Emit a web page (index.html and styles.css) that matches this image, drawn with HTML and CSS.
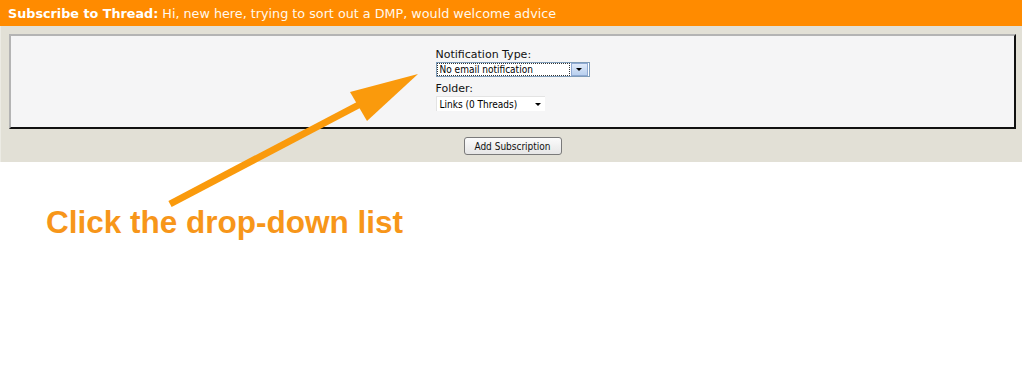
FILE: index.html
```html
<!DOCTYPE html>
<html lang="en">
<head>
    <meta charset="UTF-8">
    <title>Subscribe to Thread</title>
    <link rel="stylesheet" href="styles.css">
</head>
<body>
    <div class="page">
        <div class="thead">
            <strong>Subscribe to Thread:</strong> Hi, new here, trying to sort out a DMP, would welcome advice
        </div>
        <div class="panel">
            <div class="panel-inner">
                <div class="form-block">
                    <label>Notification Type:</label>
                    <div class="select select-focus">
                        <span class="select-text">No email notification</span>
                        <span class="select-btn"><span class="caret"></span></span>
                    </div>
                    <label>Folder:</label>
                    <div class="select select-plain">
                        <span class="select-text">Links (0 Threads)</span>
                        <span class="select-btn"><span class="caret"></span></span>
                    </div>
                </div>
            </div>
            <div class="actions">
                <button class="button">Add Subscription</button>
            </div>
        </div>

        <div class="callout">Click the drop-down list</div>

        <!-- annotation arrow drawn over the form -->
        <svg class="arrow" width="1024" height="369" viewBox="0 0 1024 369">
            <line x1="170" y1="204" x2="368" y2="100" stroke="#fa9a0c" stroke-width="7"/>
            <polygon points="418,74 350,92 367,121" fill="#fa9a0c"/>
        </svg>
    </div>
</body>
</html>
```

FILE: styles.css
```css
body {
    margin: 0;
    padding: 0;
    background-color: #ffffff;
    font-family: "DejaVu Sans", Verdana, sans-serif;
}

.page {
    position: relative;
    width: 1022px;
    height: 369px;
}

.thead {
    background-color: #ff8b00;
    color: #fff8ec;
    font-size: 12.75px;
    height: 26px;
    line-height: 27px;
    padding-left: 8px;
    white-space: nowrap;
}

.thead strong {
    color: #ffffff;
}

.panel {
    background-color: #e2e0d6;
    padding: 8px 6px 7px 8px;
    border-left: 1px solid #ecebe4;
}

.panel-inner {
    background-color: #f5f5f6;
    border-top: 2px solid #b4b4b4;
    border-left: 2px solid #b4b4b4;
    border-right: 2px solid #111111;
    border-bottom: 2px solid #111111;
    height: 91px;
    display: flex;
    justify-content: center;
}

.form-block {
    display: flex;
    flex-direction: column;
    align-items: flex-start;
    padding-top: 12px;
    font-size: 11px;
    color: #111111;
}

.form-block label {
    line-height: 13px;
}

.select {
    display: flex;
    align-items: center;
    height: 13px;
    background-color: #ffffff;
    font-family: "DejaVu Sans Condensed", Tahoma, sans-serif;
    font-size: 10px;
    color: #000000;
    margin-bottom: 5px;
}

.select-focus {
    width: 152px;
    border: 1px solid #7f9db9;
    margin-top: 1px;
}

.select-focus .select-text {
    flex: 1;
    outline: 1px dotted #333;
    outline-offset: -1px;
    padding: 0 3px;
    height: 13px;
    line-height: 13px;
}

.select-focus .select-btn {
    width: 15px;
    height: 11px;
    margin: 0 1px;
    background: linear-gradient(#dfeaf9, #b9d0ef);
    border: 1px solid #8fa9d2;
    display: flex;
    align-items: center;
    justify-content: center;
}

.select-plain {
    width: 108px;
    height: 14px;
    border-top: 1px solid #e3e3e3;
    border-left: 1px solid #e3e3e3;
    margin-top: 1px;
}

.select-plain .select-text {
    flex: 1;
    padding-left: 3px;
}

.select-plain .select-btn {
    width: 14px;
    display: flex;
    justify-content: center;
}

.caret {
    width: 0;
    height: 0;
    border-left: 3px solid transparent;
    border-right: 3px solid transparent;
    border-top: 3px solid #000;
}

.actions {
    display: flex;
    justify-content: center;
    padding-top: 8px;
}

.button {
    font-family: "DejaVu Sans Condensed", Tahoma, sans-serif;
    font-size: 10px;
    color: #111;
    width: 98px;
    height: 18px;
    padding: 0;
    border: 1px solid #7a7a7a;
    border-radius: 3px;
    background: linear-gradient(#fbfbfb, #e6e6e6);
}

.callout {
    margin-top: 42px;
    margin-left: 46px;
    font-family: "Liberation Sans", Arial, sans-serif;
    font-weight: bold;
    font-size: 31.5px;
    color: #f7961a;
}

.arrow {
    position: absolute;
    top: 0;
    left: 0;
}
```
